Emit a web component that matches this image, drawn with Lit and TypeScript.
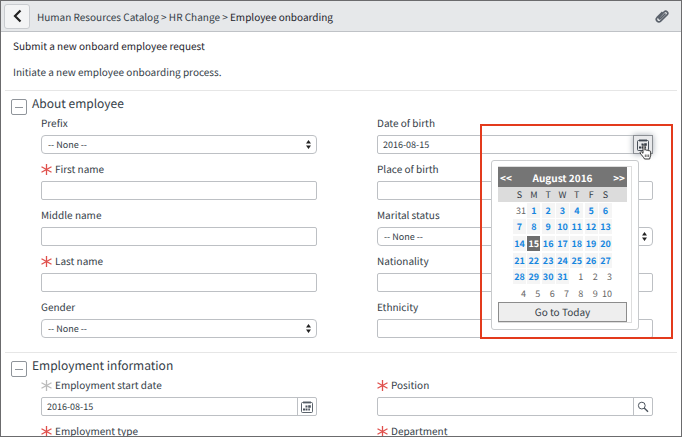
import { LitElement, html, css } from "lit";
import { customElement, property } from "lit/decorators.js";

const calendarIcon = html`<svg viewBox="0 0 12 12" width="12" height="12" aria-hidden="true">
  <path d="M1.500 1.500h9a1 1 0 0 1 1 1v8a1 1 0 0 1-1 1h-9a1 1 0 0 1-1-1v-8a1 1 0 0 1 1-1z" fill="none" stroke="currentColor" stroke-width=".9"></path>
  <path d="M3 0v2.800M5 0v2.800M7 0v2.800M9 0v2.800" stroke="currentColor" stroke-width=".9" fill="none"></path>
  <path d="M7.200 4.200h2.600v2.600H7.200zM4.500 4.600h2v2h-2zM2 7.400h2v2H2zM4.500 7.400h2v2h-2zM7.300 7.600h1.600v1.800H7.300z" fill="currentColor"></path>
</svg>`;
const searchIcon = html`<svg viewBox="0 0 12 12" width="12" height="12" aria-hidden="true">
  <circle cx="4.800" cy="4.600" r="3.400" fill="none" stroke="currentColor" stroke-width="1"></circle>
  <path d="M7.200 7L11 10.800" stroke="currentColor" stroke-width="1.400"></path>
</svg>`;
const handIcon = html`<svg class="hand" viewBox="0 0 14 16" width="14" height="16" aria-hidden="true">
  <path d="M4 1.200c1-.7 1.900 0 1.900 1v4c.3-.7 1.800-.6 2 .3.500-.6 1.700-.4 1.900.5.600-.5 1.900-.2 1.900.9v3.300c0 1.500-.9 2-1 3.800H5.500C5 13.500 2.300 11 1.200 9c-.4-1 .8-1.600 1.500-1L4 9.300V1.200z" fill="#fff" stroke="#333" stroke-width="1"></path>
  <path d="M6.300 10.500v2.500M8 10.500v2.500M9.700 10.500v2.500" stroke="#333" stroke-width=".8"></path>
</svg>`;

@customElement("form-field")
class FormField extends LitElement {
  @property() label = "";
  @property() kind = "text";
  @property() value = "";
  @property() mark = "";
  @property({ type: Boolean }) active = false;

  static styles = css`
    :host { display: block; height: 46px; color: #343d47; }
    .label { display: flex; align-items: center; gap: 3px; height: 20px; margin-bottom: 2px; font-size: 10px; line-height: 20px; white-space: nowrap; }
    .mark { width: 11px; height: 11px; color: #e0504c; }
    .optional { color: #bbb; }
    .box { display: flex; position: relative; height: 19px; box-sizing: border-box; border: 1px solid #bdc0c4; border-radius: 2px; background: #fff; }
    .choice { border-radius: 4px; }
    .control { flex: 1; min-width: 0; width: 100%; border: 0; margin: 0; padding: 0 5px; background: none; appearance: none; outline: none; font: inherit; font-size: 9px; line-height: 17px; color: #343d47; text-rendering: inherit; }
    .choice .control { padding-left: 6px; }
    .arrows { position: absolute; right: 5px; top: 4px; color: #222; pointer-events: none; }
    .tool { flex: none; display: flex; align-items: center; justify-content: center; width: 19px; padding: 0; border: 0; border-left: 1px solid #bdc0c4; background: none; color: #4a525c; }
    .pressed { position: relative; border: 1px solid #8b8f94; margin: -1px; width: 20px; background: #e8e9eb; color: #343d47; box-shadow: 0 0 6px #a4abb3; }
    .hand { position: absolute; left: 5px; top: 8px; }
  `;

  private control() {
    if (this.kind === "select")
      return html`<select id="control" class="control"><option>-- None --</option></select>
        <svg class="arrows" viewBox="0 0 5 9" width="5" height="9" aria-hidden="true"><path d="M0 3.500L2.500 0 5 3.500zM0 5.500L2.500 9 5 5.500z" fill="currentColor"></path></svg>`;
    return html`<input id="control" class="control" type="text" .value=${this.value} />
      ${this.kind === "date" ? html`<button class="tool ${this.active ? "pressed" : ""}" aria-label="Choose date">${calendarIcon}${this.active ? handIcon : ""}</button>` : ""}
      ${this.kind === "lookup" ? html`<button class="tool" aria-label="Look up">${searchIcon}</button>` : ""}`;
  }

  render() {
    return html`<label class="label" for="control">
        ${this.mark ? html`<svg class="mark ${this.mark}" viewBox="0 0 11 11" aria-hidden="true"><path d="M5.500 0v11M.5 2.700l10 5.600M.5 8.300l10-5.600" stroke="currentColor" stroke-width="1.300"></path></svg>` : ""}${this.label}
      </label>
      <div class="box ${this.kind === "select" ? "choice" : ""}">${this.control()}</div>`;
  }
}

@customElement("date-picker")
class DatePicker extends LitElement {
  static styles = css`
    :host { display: block; box-sizing: border-box; width: 148px; padding: 5px 6px 6px; border: 1px solid #c8cacc; border-radius: 3px; background: #fff; color: #343d47; }
    .inner { padding-right: 4px; border: 1px solid #ddd; border-left: 0; }
    .head { display: flex; align-items: center; justify-content: space-between; height: 20px; padding: 0 2px; background: #757575; color: #fff; font-size: 10px; font-weight: 700; }
    button { font: inherit; color: inherit; border: 0; padding: 0; background: none; text-rendering: inherit; }
    .days { width: 100%; height: 115px; table-layout: fixed; border-collapse: collapse; text-align: center; font-size: 9px; line-height: 14px; }
    .days th, .days td { padding: 0; }
    .days th { height: 15px; background: #dcdcdc; font-weight: 400; }
    .days .day { display: block; width: 13px; height: 15px; margin: 0 auto; line-height: 15px; background: #f5f5f5; color: #1787e0; font-weight: 700; }
    .days .outside { background: none; color: #666; font-weight: 400; text-align: right; }
    .days .chosen { background: #6d6d6d; color: #fff; }
    .today { display: block; width: 100%; height: 20px; box-sizing: border-box; border: 1px solid #8c8c8c; background: #eee; font-size: 10px; line-height: 18px; }
  `;

  render() {
    const weeks = Array.from({ length: 6 }, (_, w) =>
      Array.from({ length: 7 }, (_, d) => new Date(2016, 6, 31 + w * 7 + d)));
    return html`<div class="inner">
      <div class="head"><button aria-label="Previous month">&lt;&lt;</button><span>August 2016</span><button aria-label="Next month">&gt;&gt;</button></div>
      <table class="days">
        <thead><tr><th></th>${[..."SMTWTFS"].map((d) => html`<th>${d}</th>`)}<th></th></tr></thead>
        <tbody>${weeks.map((week) => html`<tr><td></td>${week.map((date) => {
          const state = date.getMonth() !== 7 ? "outside" : date.getDate() === 15 ? "chosen" : "";
          return html`<td><button class="day ${state}">${date.getDate()}</button></td>`;
        })}<td></td></tr>`)}</tbody>
      </table>
      <button class="today">Go to Today</button>
    </div>`;
  }
}

@customElement("app-root")
class AppRoot extends LitElement {
  static styles = css`
    :host { display: block; box-sizing: border-box; height: 100vh; overflow: hidden; border: 1px solid #6b6b6d; background: #fff; color: #343d47; font: 10px "Noto Sans CJK SC", "Noto Sans", sans-serif; text-rendering: geometricPrecision; }
    .bar { display: flex; align-items: center; height: 30px; padding: 0 12px 0 3px; border-bottom: 1px solid #bfc2c6; background: #e6e8ea; }
    .back { display: flex; align-items: center; justify-content: center; width: 26px; height: 25px; padding: 0; border: 1px solid #c9ccd0; border-radius: 3px; background: #f3f4f5; color: #222; }
    .crumbs { flex: 1; margin-left: 7px; white-space: nowrap; }
    .crumbs a { color: inherit; text-decoration: none; }
    .here { color: #1d232b; }
    .attach { display: flex; padding: 0; border: 0; background: none; color: #5a616b; }
    .intro { height: 53px; padding: 5px 12px 0; line-height: 18px; }
    .title, .lead { margin: 0 0 8px; font-size: 10px; font-weight: 400; }
    .title { color: #1d232b; }
    .section { margin: 0 4px; border-top: 1px solid #e6e6e6; }
    .heading { display: flex; gap: 5px; height: 19px; padding: 3px 6px 0; }
    .fold { flex: none; width: 16px; height: 16px; margin-top: 5px; padding: 3px; border: 1px solid #8f949a; border-radius: 2px; background: #fff; display: flex; align-items: center; }
    .fold::before { content: ""; flex: 1; height: 1px; background: #8f949a; }
    .name { margin: 0; font-size: 12px; line-height: 20px; font-weight: 400; }
    .fields { display: grid; grid-template-columns: 1fr 1fr; column-gap: 60px; padding: 0 24px 9px 36px; }
    .cell { position: relative; }
    .popup { position: absolute; z-index: 1; right: 14px; top: 47px; }
    .callout { position: absolute; z-index: 2; right: -20px; top: 11px; width: 193px; height: 215px; box-sizing: border-box; border: 2px solid #e33a1c; pointer-events: none; }
  `;

  render() {
    return html`
      <header class="bar">
        <button class="back" aria-label="Back"><svg width="9" height="14" viewBox="0 0 9 14" aria-hidden="true"><path d="M7.500 1.500L2 7l5.500 5.500" fill="none" stroke="currentColor" stroke-width="2.200"></path></svg></button>
        <nav class="crumbs"><a href="#catalog">Human Resources Catalog</a> &gt; <a href="#hr">HR Change</a> &gt; <span class="here">Employee onboarding</span></nav>
        <button class="attach" aria-label="Attachments"><svg width="14" height="14" viewBox="0 0 14 14" aria-hidden="true"><path d="M10.500 4.500L5.500 9.500c-.8.8-2-.2-1.200-1.200L9.300 2.800c1.800-1.800 4.700.8 2.900 2.800L5.600 12.200C3.300 14.300-.1 11 2 8.700L7.500 3" fill="none" stroke="currentColor" stroke-width="1.700"></path></svg></button>
      </header>
      <div class="intro">
        <h1 class="title">Submit a new onboard employee request</h1>
        <p class="lead">Initiate a new employee onboarding process.</p>
      </div>
      <section class="section">
        <div class="heading"><button class="fold" aria-label="Collapse About employee"></button><h2 class="name">About employee</h2></div>
        <div class="fields">
          <form-field label="Prefix" kind="select"></form-field>
          <div class="cell">
            <form-field label="Date of birth" kind="date" value="2016-08-15" active></form-field>
            <date-picker class="popup"></date-picker>
            <div class="callout"></div>
          </div>
          <form-field label="First name" mark="required"></form-field>
          <form-field label="Place of birth"></form-field>
          <form-field label="Middle name"></form-field>
          <form-field label="Marital status" kind="select"></form-field>
          <form-field label="Last name" mark="required"></form-field>
          <form-field label="Nationality"></form-field>
          <form-field label="Gender" kind="select"></form-field>
          <form-field label="Ethnicity"></form-field>
        </div>
      </section>
      <section class="section">
        <div class="heading"><button class="fold" aria-label="Collapse Employment information"></button><h2 class="name">Employment information</h2></div>
        <div class="fields">
          <form-field label="Employment start date" kind="date" value="2016-08-15" mark="optional"></form-field>
          <form-field label="Position" kind="lookup" mark="required"></form-field>
          <form-field label="Employment type" kind="select" mark="required"></form-field>
          <form-field label="Department" kind="lookup" mark="required"></form-field>
        </div>
      </section>`;
  }
}
